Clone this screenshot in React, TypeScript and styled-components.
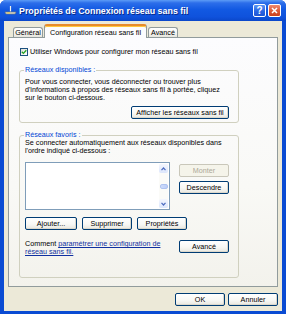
import React from 'react';
import styled, { createGlobalStyle, css } from 'styled-components';

const FONT = `"Liberation Sans", Arial, sans-serif`;

const Global = createGlobalStyle`
  html, body { margin: 0; padding: 0; background: #ffffff; }
  body { font-family: ${FONT}; }
`;

const Window = styled.div`
  width: 286px;
  height: 314px;
  box-sizing: border-box;
  display: flex;
  flex-direction: column;
  background: #0A4BD3;
  border-radius: 6px 6px 0 0;
  overflow: hidden;
  font-family: ${FONT};
  font-size: 7.2px;
  color: #000;
`;

const TitleBar = styled.div`
  height: 21px;
  flex: none;
  display: flex;
  align-items: center;
  gap: 2px;
  padding: 0 5px 0 4px;
  box-sizing: border-box;
  background: linear-gradient(to bottom, #5D9CF6 0%, #2C6EEA 14%, #1259E2 45%, #0F52DC 80%, #0B47C9 100%);
`;

const TitleIcon = styled.svg`
  width: 13px;
  height: 11px;
  flex: none;
`;

const TitleText = styled.div`
  flex: 1;
  color: #ffffff;
  font-weight: bold;
  font-size: 8.9px;
  white-space: nowrap;
  text-shadow: 1px 1px 0 #0A2A8A;
`;

const CaptionButtons = styled.div`
  display: flex;
  gap: 2px;
`;

const CaptionButton = styled.div<{ $kind: 'help' | 'close' }>`
  width: 13px;
  height: 13px;
  box-sizing: border-box;
  border: 1px solid #ffffff;
  border-radius: 2px;
  display: flex;
  align-items: center;
  justify-content: center;
  color: #ffffff;
  font-weight: bold;
  font-size: 10px;
  ${(p) =>
    p.$kind === 'help'
      ? css`background: linear-gradient(to bottom, #5B95F4 0%, #2A66E4 55%, #1F55D4 100%);`
      : css`background: linear-gradient(to bottom, #EE8A6E 0%, #DC5A36 55%, #C9401C 100%);`}
`;

const Client = styled.div`
  flex: 1;
  margin: 0 4px 3px 4px;
  background: #ECE9D8;
  display: flex;
  flex-direction: column;
  padding: 3px 4px 0 4px;
`;

const TabStrip = styled.div`
  height: 13px;
  flex: none;
  display: flex;
  align-items: flex-end;
  gap: 1px;
  padding-left: 5px;
`;

const Tab = styled.div<{ $w: number; $active?: boolean }>`
  width: ${(p) => p.$w}px;
  box-sizing: border-box;
  display: flex;
  align-items: center;
  justify-content: center;
  white-space: nowrap;
  border: 1px solid #919B9C;
  border-bottom: none;
  border-radius: 3px 3px 0 0;
  ${(p) =>
    p.$active
      ? css`
          height: 14px;
          margin-bottom: -1px;
          position: relative;
          z-index: 1;
          background: #FCFCFE;
          border-top: 2px solid #E68B2C;
          box-shadow: inset 0 1px 0 #FFC83C;
        `
      : css`
          height: 10px;
          background: linear-gradient(to bottom, #FFFFFF 0%, #F3F3EF 60%, #E6E5DD 100%);
        `}
`;

const Panel = styled.div`
  height: 250px;
  flex: none;
  box-sizing: border-box;
  border: 1px solid #919B9C;
  background: linear-gradient(to bottom, #FCFCFE 0%, #F9F9F6 60%, #F3F2EC 100%);
  padding: 10px 0 0 10px;
  display: flex;
  flex-direction: column;
  align-items: flex-start;
`;

const CheckRow = styled.div`
  height: 8px;
  display: flex;
  align-items: center;
  gap: 2px;
  margin-left: 1px;
  white-space: nowrap;
  line-height: 8px;
`;

const CheckBox = styled.div`
  width: 8px;
  height: 8px;
  box-sizing: border-box;
  border: 1px solid #1C5180;
  background: linear-gradient(135deg, #DCDCD5 0%, #F4F4F0 60%, #FFFFFF 100%);
  display: flex;
  align-items: center;
  justify-content: center;
`;

const GroupBox = styled.fieldset<{ $mt: number }>`
  width: 220px;
  box-sizing: border-box;
  margin: ${(p) => p.$mt}px 0 0 0;
  min-width: 0;
  padding: 0 9px 0 5px;
  border: 1px solid #D0D0BF;
  border-radius: 3px;
`;

const Legend = styled.legend`
  color: #0046D5;
  padding: 0 1px;
  margin-left: -1px;
  line-height: 8px;
  white-space: nowrap;
`;

const GroupBody = styled.div<{ $pt: number; $pb: number }>`
  display: flex;
  flex-direction: column;
  padding: ${(p) => p.$pt}px 0 ${(p) => p.$pb}px 0;
`;

const Para = styled.div`
  line-height: 8px;
  white-space: nowrap;
`;

const RightRow = styled.div<{ $mt: number }>`
  display: flex;
  justify-content: flex-end;
  margin-top: ${(p) => p.$mt}px;
`;

const ButtonRow = styled.div<{ $mt: number }>`
  display: flex;
  gap: 5px;
  margin-top: ${(p) => p.$mt}px;
`;

const ListRow = styled.div`
  display: flex;
  gap: 9px;
  margin-top: 7px;
`;

const ListBox = styled.div`
  width: 145px;
  height: 48px;
  box-sizing: border-box;
  border: 1px solid #7F9DB9;
  background: #ffffff;
  display: flex;
  justify-content: flex-end;
  padding: 1px 1px 1px 0;
`;

const ScrollBar = styled.div`
  width: 9px;
  display: flex;
  flex-direction: column;
  justify-content: space-between;
  align-items: center;
  background: #FBFBF8;
`;

const ScrollArrow = styled.div`
  width: 9px;
  height: 9px;
  box-sizing: border-box;
  border-radius: 2px;
  background: linear-gradient(to bottom, #F3F6FE 0%, #DCE6FC 100%);
  display: flex;
  align-items: center;
  justify-content: center;
`;

const ScrollThumb = styled.div`
  width: 8px;
  height: 5px;
  border-radius: 2px;
  background: linear-gradient(to right, #CFDCFB 0%, #BCCEF8 100%);
  border: 1px solid #AFC3F0;
  box-sizing: border-box;
`;

const SideButtons = styled.div`
  display: flex;
  flex-direction: column;
  gap: 4px;
  padding-top: 2px;
`;

const Button = styled.button<{ $w: number }>`
  width: ${(p) => p.$w}px;
  height: 13px;
  box-sizing: border-box;
  padding: 0;
  margin: 0;
  font-family: ${FONT};
  font-size: 7.2px;
  line-height: 11px;
  white-space: nowrap;
  color: #000;
  border: 1px solid #003C74;
  border-radius: 2px;
  background: linear-gradient(to bottom, #FFFFFF 0%, #F8F8F5 55%, #E8E7E0 100%);
  box-shadow: inset -1px -1px 0 #DCD8CC;
  &:disabled {
    color: #ACA899;
    border-color: #C9C7BA;
    background: #F5F4EA;
    box-shadow: none;
  }
`;

const BottomRow = styled.div`
  display: flex;
  justify-content: space-between;
  align-items: flex-start;
  margin-top: 10px;
`;

const HelpText = styled.div`
  line-height: 8px;
  white-space: nowrap;
`;

const Link = styled.span`
  color: #1030A0;
  text-decoration: underline;
`;

const Footer = styled.div`
  display: flex;
  justify-content: flex-end;
  gap: 3px;
  margin-top: 6px;
`;

export default function App() {
  return (
    <>
      <Global />
      <Window>
        <TitleBar>
          <TitleIcon viewBox="0 0 13 11">
            <line x1="6.5" y1="1" x2="6.5" y2="6.5" stroke="#F2F2E8" strokeWidth="1.2" />
            <path d="M1 7 L12 7 L11 9 L2 9 Z" fill="#DCDCD0" stroke="#7A7A70" strokeWidth="0.6" />
            <rect x="3" y="7.4" width="3" height="1" fill="#E8C84A" />
          </TitleIcon>
          <TitleText>Propriétés de Connexion réseau sans fil</TitleText>
          <CaptionButtons>
            <CaptionButton $kind="help">?</CaptionButton>
            <CaptionButton $kind="close">
              <svg width="7" height="7" viewBox="0 0 7 7">
                <path d="M1 1 L6 6 M6 1 L1 6" stroke="#ffffff" strokeWidth="1.5" />
              </svg>
            </CaptionButton>
          </CaptionButtons>
        </TitleBar>
        <Client>
          <TabStrip>
            <Tab $w={30}>Général</Tab>
            <Tab $w={103} $active>
              Configuration réseau sans fil
            </Tab>
            <Tab $w={30}>Avancé</Tab>
          </TabStrip>
          <Panel>
            <CheckRow>
              <CheckBox>
                <svg width="6" height="6" viewBox="0 0 6 6">
                  <path d="M0.8 2.8 L2.4 4.4 L5.3 1.2" stroke="#21A121" strokeWidth="1.3" fill="none" />
                </svg>
              </CheckBox>
              <span>Utiliser Windows pour configurer mon réseau sans fil</span>
            </CheckRow>
            <GroupBox $mt={10}>
              <Legend>Réseaux disponibles :</Legend>
              <GroupBody $pt={4} $pb={3}>
                <Para>
                  Pour vous connecter, vous déconnecter ou trouver plus
                  <br />
                  d'informations à propos des réseaux sans fil à portée, cliquez
                  <br />
                  sur le bouton ci-dessous.
                </Para>
                <RightRow $mt={4}>
                  <Button $w={98}>Afficher les réseaux sans fil</Button>
                </RightRow>
              </GroupBody>
            </GroupBox>
            <GroupBox $mt={8}>
              <Legend>Réseaux favoris :</Legend>
              <GroupBody $pt={0} $pb={21}>
                <Para>
                  Se connecter automatiquement aux réseaux disponibles dans
                  <br />
                  l'ordre indiqué ci-dessous :
                </Para>
                <ListRow>
                  <ListBox>
                    <ScrollBar>
                      <ScrollArrow>
                        <svg width="5" height="4" viewBox="0 0 5 4">
                          <path d="M0.5 3.2 L2.5 1 L4.5 3.2" stroke="#4D6CC0" strokeWidth="1.2" fill="none" />
                        </svg>
                      </ScrollArrow>
                      <ScrollThumb />
                      <ScrollArrow>
                        <svg width="5" height="4" viewBox="0 0 5 4">
                          <path d="M0.5 0.8 L2.5 3 L4.5 0.8" stroke="#4D6CC0" strokeWidth="1.2" fill="none" />
                        </svg>
                      </ScrollArrow>
                    </ScrollBar>
                  </ListBox>
                  <SideButtons>
                    <Button $w={50} disabled>
                      Monter
                    </Button>
                    <Button $w={50}>Descendre</Button>
                  </SideButtons>
                </ListRow>
                <ButtonRow $mt={7}>
                  <Button $w={52}>Ajouter...</Button>
                  <Button $w={50}>Supprimer</Button>
                  <Button $w={50}>Propriétés</Button>
                </ButtonRow>
                <BottomRow>
                  <HelpText>
                    Comment <Link>paramétrer une configuration de</Link>
                    <br />
                    <Link>réseau sans fil.</Link>
                  </HelpText>
                  <Button $w={50}>Avancé</Button>
                </BottomRow>
              </GroupBody>
            </GroupBox>
          </Panel>
          <Footer>
            <Button $w={50}>OK</Button>
            <Button $w={50}>Annuler</Button>
          </Footer>
        </Client>
      </Window>
    </>
  );
}
